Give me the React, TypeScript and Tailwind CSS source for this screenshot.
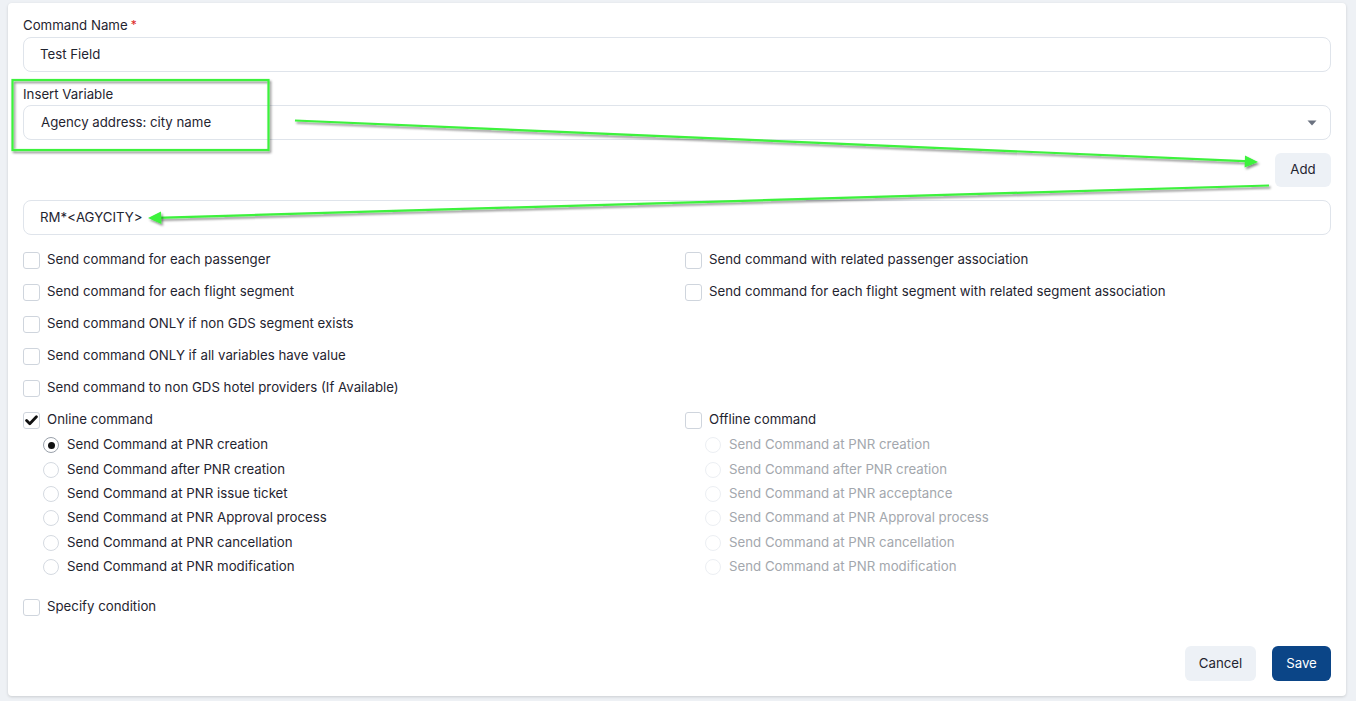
import React from 'react';

const leftChecks = [
    'Send command for each passenger',
    'Send command for each flight segment',
    'Send command ONLY if non GDS segment exists',
    'Send command ONLY if all variables have value',
    'Send command to non GDS hotel providers (If Available)',
];

const rightChecks = [
    'Send command with related passenger association',
    'Send command for each flight segment with related segment association',
];

const onlineOptions = [
    'Send Command at PNR creation',
    'Send Command after PNR creation',
    'Send Command at PNR issue ticket',
    'Send Command at PNR Approval process',
    'Send Command at PNR cancellation',
    'Send Command at PNR modification',
];

const offlineOptions = [
    'Send Command at PNR creation',
    'Send Command after PNR creation',
    'Send Command at PNR acceptance',
    'Send Command at PNR Approval process',
    'Send Command at PNR cancellation',
    'Send Command at PNR modification',
];

function Checkbox({ label, checked = false }: { label: string; checked?: boolean }) {
    return (
        <label className="flex items-center gap-[7px] h-5">
            <span className="w-[17px] h-[17px] rounded-[3px] border border-[#cfd5dd] bg-white flex items-center justify-center shrink-0">
                {checked && (
                    <svg width="13" height="11" viewBox="0 0 13 11">
                        <path d="M1.6 5.6 L4.8 8.8 L11.4 1.8" fill="none" stroke="#111" strokeWidth="2.8" strokeLinecap="round" strokeLinejoin="round" />
                    </svg>
                )}
            </span>
            <span className="text-[13.25px] text-[#1f2430]">{label}</span>
        </label>
    );
}

function Radio({ label, selected = false, disabled = false }: { label: string; selected?: boolean; disabled?: boolean }) {
    return (
        <label className="flex items-center gap-2 h-[24.4px]">
            <span
                className={
                    'w-4 h-4 rounded-full border bg-white flex items-center justify-center shrink-0 ' +
                    (selected ? 'border-[#9aa1ab]' : disabled ? 'border-[#eceff3]' : 'border-[#d5dae1]')
                }
            >
                {selected && <span className="w-[7px] h-[7px] rounded-full bg-[#111]" />}
            </span>
            <span className={'text-[13.25px] ' + (disabled ? 'text-[#a3a7ad]' : 'text-[#1f2430]')}>{label}</span>
        </label>
    );
}

function Annotations() {
    return (
        <svg className="absolute top-0 left-0 pointer-events-none" width="1356" height="701" viewBox="0 0 1356 701">
            <defs>
                <filter id="sh" x="-5%" y="-50%" width="110%" height="200%">
                    <feDropShadow dx="1.5" dy="2" stdDeviation="1.2" floodColor="#000" floodOpacity="0.45" />
                </filter>
            </defs>
            <g filter="url(#sh)" stroke="#3cf23c" fill="none" strokeWidth="2.2">
                <rect x="12.5" y="80" width="256" height="70" />
                <line x1="295" y1="120.5" x2="1250" y2="161.3" />
                <line x1="1269" y1="185.5" x2="156" y2="217.8" />
            </g>
            <g filter="url(#sh)" fill="#3cf23c">
                <polygon points="1258,162 1245,155.5 1244.6,167.5" />
                <polygon points="148,218 161,211.5 161.4,224" />
            </g>
        </svg>
    );
}

export default function App() {
    return (
        <div className="relative w-[1356px] h-[701px] bg-[#eef1f5] pt-[3px] pl-2 overflow-hidden" style={{ fontFamily: 'Inter, "Noto Sans", sans-serif' }}>
            <div className="w-[1338px] h-[693px] bg-white rounded-[4px] shadow-[0_1px_3px_rgba(0,0,0,0.15)] px-[15px] pt-[12px] flex flex-col">
                {/* Command name */}
                <div className="text-[13.25px] text-[#1f2430] leading-5">
                    Command Name<span className="text-[#dc2626] ml-[3px] align-top text-[12px]">*</span>
                </div>
                <div className="mt-[2px] h-[35px] rounded-[8px] border border-[#dfe4eb] flex items-center pl-[16px] text-[13.25px] text-[#1f2430]">
                    Test Field
                </div>

                {/* Insert variable */}
                <div className="mt-[12px] text-[13.25px] text-[#1f2430] leading-5">Insert Variable</div>
                <div className="mt-[1px] h-[35px] rounded-[8px] border border-[#dfe4eb] flex items-center justify-between pl-[17px] pr-[13px] text-[13.25px] text-[#1f2430]">
                    <span>Agency address: city name</span>
                    <svg width="10" height="6" viewBox="0 0 10 6">
                        <path d="M0.5 0.5 L9.5 0.5 L5 5.5 Z" fill="#6b7280" />
                    </svg>
                </div>

                <div className="mt-[13px] flex justify-end">
                    <button className="h-[34px] w-[56px] rounded-[6px] bg-[#edf1f6] text-[13.25px] text-[#1f2430]">Add</button>
                </div>

                <div className="mt-[13px] h-[35px] rounded-[8px] border border-[#dfe4eb] flex items-center pl-[16px] text-[13.25px] text-[#1f2430]">
                    RM*&lt;AGYCITY&gt;
                </div>

                {/* Options */}
                <div className="mt-[15px] grid grid-cols-2 gap-x-4">
                    <div className="flex flex-col gap-3">
                        {leftChecks.map((c) => (
                            <Checkbox key={c} label={c} />
                        ))}
                        <Checkbox label="Online command" checked />
                    </div>
                    <div className="flex flex-col gap-3">
                        {rightChecks.map((c) => (
                            <Checkbox key={c} label={c} />
                        ))}
                        <div className="h-5" />
                        <div className="h-5" />
                        <div className="h-5" />
                        <Checkbox label="Offline command" />
                    </div>
                    <div className="flex flex-col pl-5 mt-[3px]">
                        {onlineOptions.map((o, i) => (
                            <Radio key={o} label={o} selected={i === 0} />
                        ))}
                    </div>
                    <div className="flex flex-col pl-5 mt-[3px]">
                        {offlineOptions.map((o) => (
                            <Radio key={o} label={o} disabled />
                        ))}
                    </div>
                </div>

                <div className="mt-[18px]">
                    <Checkbox label="Specify condition" />
                </div>

                <div className="mt-auto mb-[15px] flex justify-end gap-4">
                    <button className="h-[35px] w-[71px] rounded-[6px] bg-[#edf1f6] text-[13.25px] text-[#1f2430]">Cancel</button>
                    <button className="h-[35px] w-[59px] rounded-[6px] bg-[#0b4587] text-[13.25px] text-white">Save</button>
                </div>
            </div>
            <Annotations />
        </div>
    );
}
